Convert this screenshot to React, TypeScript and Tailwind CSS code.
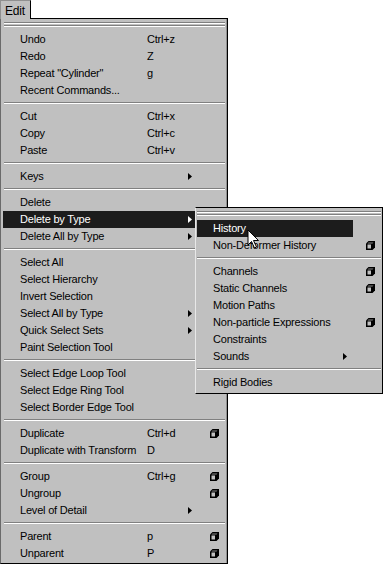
import React from 'react';

type Item =
  | { sep: true }
  | { label: string; key?: string; arrow?: boolean; opt?: boolean; hl?: boolean; sep?: false };

const mainItems: Item[] = [
  { label: 'Undo', key: 'Ctrl+z' },
  { label: 'Redo', key: 'Z' },
  { label: 'Repeat "Cylinder"', key: 'g' },
  { label: 'Recent Commands...' },
  { sep: true },
  { label: 'Cut', key: 'Ctrl+x' },
  { label: 'Copy', key: 'Ctrl+c' },
  { label: 'Paste', key: 'Ctrl+v' },
  { sep: true },
  { label: 'Keys', arrow: true },
  { sep: true },
  { label: 'Delete' },
  { label: 'Delete by Type', arrow: true, hl: true },
  { label: 'Delete All by Type', arrow: true },
  { sep: true },
  { label: 'Select All' },
  { label: 'Select Hierarchy' },
  { label: 'Invert Selection' },
  { label: 'Select All by Type', arrow: true },
  { label: 'Quick Select Sets', arrow: true },
  { label: 'Paint Selection Tool' },
  { sep: true },
  { label: 'Select Edge Loop Tool' },
  { label: 'Select Edge Ring Tool' },
  { label: 'Select Border Edge Tool' },
  { sep: true },
  { label: 'Duplicate', key: 'Ctrl+d', opt: true },
  { label: 'Duplicate with Transform', key: 'D' },
  { sep: true },
  { label: 'Group', key: 'Ctrl+g', opt: true },
  { label: 'Ungroup', opt: true },
  { label: 'Level of Detail', arrow: true },
  { sep: true },
  { label: 'Parent', key: 'p', opt: true },
  { label: 'Unparent', key: 'P', opt: true },
];

const subItems: Item[] = [
  { label: 'History', hl: true },
  { label: 'Non-Deformer History', opt: true },
  { sep: true },
  { label: 'Channels', opt: true },
  { label: 'Static Channels', opt: true },
  { label: 'Motion Paths' },
  { label: 'Non-particle Expressions', opt: true },
  { label: 'Constraints' },
  { label: 'Sounds', arrow: true },
  { sep: true },
  { label: 'Rigid Bodies' },
];

function Arrow({ white }: { white?: boolean }) {
  return (
    <svg width="4" height="7" viewBox="0 0 4 7" className="shrink-0">
      <path d="M0 0 L4 3.5 L0 7 Z" fill={white ? '#fff' : '#000'} />
    </svg>
  );
}

function OptBox() {
  return (
    <svg width="9" height="9" viewBox="0 0 9 9" className="block">
      <path d="M0 2.5 L2.5 0 H9 V6.5 L6.5 9 H0 Z" fill="#000" />
      <rect x="1.5" y="3.5" width="3.5" height="4" fill="#c0c0c0" />
      <path d="M2.5 1.5 H7.5 L6.5 2.5 H1.5 Z" fill="#8a8a8a" />
    </svg>
  );
}

function Separator({ inset }: { inset: string }) {
  return (
    <div className={`pt-[3px] pb-[4px] ${inset}`}>
      <div className="h-px bg-[#808080]" />
      <div className="h-px bg-white" />
    </div>
  );
}

function TearOff({ inset }: { inset: string }) {
  return (
    <div className={`pt-[3px] pb-[4px] ${inset}`}>
      <div className="h-px bg-[#808080]" />
      <div className="h-px bg-white" />
      <div className="h-px" />
      <div className="h-px bg-[#808080]" />
      <div className="h-px bg-white" />
    </div>
  );
}

function MainRow({ item }: { item: Exclude<Item, { sep: true }> }) {
  return (
    <div className="flex h-[17px] items-center">
      <div
        className={`flex h-full w-[195px] items-center pl-[17px] ${
          item.hl ? 'bg-[#1c1c1c] text-white' : 'text-black'
        }`}
      >
        <span className="w-[127px] whitespace-nowrap">{item.label}</span>
        <span className="w-[41px] whitespace-nowrap">{item.key}</span>
        {item.arrow && <Arrow white={item.hl} />}
      </div>
      <div className="pl-[12px]">{item.opt && <OptBox />}</div>
    </div>
  );
}

function SubRow({ item }: { item: Exclude<Item, { sep: true }> }) {
  return (
    <div className="flex h-[17px] items-center">
      <div
        className={`flex h-full w-[156px] items-center pl-[16px] ${
          item.hl ? 'bg-[#1c1c1c] text-white' : 'text-black'
        }`}
      >
        <span className="w-[130px] whitespace-nowrap">{item.label}</span>
        {item.arrow && <Arrow white={item.hl} />}
      </div>
      <div className="pl-[13px]">{item.opt && <OptBox />}</div>
    </div>
  );
}

export default function App() {
  return (
    <div
      className="relative h-[565px] w-[384px] overflow-hidden bg-white text-[11px] leading-none tracking-[-0.2px]"
      style={{ fontFamily: '"Liberation Sans", Arial, sans-serif' }}
    >
      {/* menu bar tab */}
      <div className="relative z-10 -mb-px flex h-[19px] w-[31px] border-t border-l border-r border-t-[#909090] border-l-[#909090] border-r-black bg-[#c0c0c0] pl-[4px] pt-[4px] text-[12px]">
        Edit
      </div>

      {/* Edit menu */}
      <div className="w-[228px] border border-t-black border-l-[#6a6a6a] border-r-black border-b-black bg-[#c0c0c0] pl-[1px] pb-px shadow-[inset_-1px_0_0_#909090]">
        <TearOff inset="mx-[2px]" />
        {mainItems.map((it, i) =>
          it.sep ? (
            <Separator key={i} inset="mx-[2px]" />
          ) : (
            <div key={i} className="pl-px">
              <MainRow item={it} />
            </div>
          )
        )}
      </div>

      {/* Delete by Type submenu */}
      <div className="absolute left-[195px] top-[207px] w-[188px] border border-t-black border-l-[#e8e8e8] border-r-black border-b-black bg-[#c0c0c0] pb-[2px] pl-px">
        <TearOff inset="mr-px" />
        {subItems.map((it, i) =>
          it.sep ? (
            <Separator key={i} inset="mr-px" />
          ) : (
            <SubRow key={i} item={it} />
          )
        )}
      </div>

      {/* mouse pointer */}
      <svg
        className="absolute left-[247px] top-[229px]"
        width="13"
        height="21"
        viewBox="0 0 13 21"
      >
        <path
          d="M1 1 L1 16 L4.5 12.5 L7.5 19 L9.5 18 L6.5 11.5 L11.5 11.5 Z"
          fill="#fff"
          stroke="#000"
          strokeWidth="1"
          strokeLinejoin="miter"
        />
      </svg>
    </div>
  );
}
